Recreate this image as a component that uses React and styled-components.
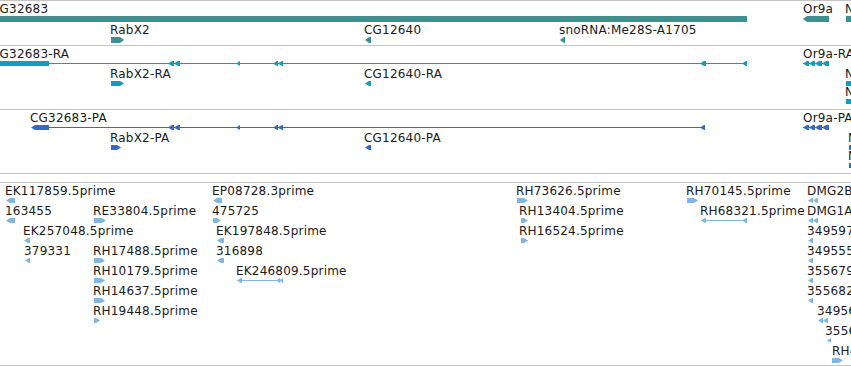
import styled, { createGlobalStyle } from "styled-components";

const GlobalStyle = createGlobalStyle`
  html, body {
    margin: 0;
    padding: 0;
    background: #fff;
  }
  body {
    font-family: "DejaVu Sans", Verdana, sans-serif;
    overflow: hidden;
  }
`;

// glyph parts: [kind, x1, x2] in track pixel coordinates
const L = (a, b) => ["L", a, b];
const R = (a, b) => ["R", a, b];
const B = (a, b) => ["B", a, b];
const ln = (a, b) => ["line", a, b];

const genes = [
  { label: "CG32683", x: -9, y: 1, parts: [B(-4, 747)] },
  { label: "RabX2", x: 110, y: 22, parts: [R(111, 124)] },
  { label: "CG12640", x: 364, y: 22, parts: [L(365, 371)] },
  { label: "snoRNA:Me28S-A1705", x: 559, y: 22, parts: [L(560, 565)] },
  { label: "Or9a", x: 803, y: 1, parts: [L(803, 829)] },
  { label: "Nplp3", x: 845, y: 1, parts: [B(846, 870)] },
];

const exonMarks = [L(168, 174), L(174, 180), L(236, 240), L(273, 278), L(278, 283)];
const orMarks = [ln(803, 829), L(803, 809), L(809, 815), L(815, 822), L(822, 829)];

const transcripts = [
  {
    label: "CG32683-RA",
    x: -9,
    y: 1,
    parts: [B(-4, 49), ln(49, 747), ...exonMarks, L(700, 706), L(742, 747)],
  },
  { label: "RabX2-RA", x: 110, y: 21, parts: [R(111, 124)] },
  { label: "CG12640-RA", x: 364, y: 21, parts: [L(365, 371)] },
  { label: "Or9a-RA", x: 803, y: 1, parts: orMarks },
  { label: "Nplp3-RA", x: 845, y: 21, parts: [B(846, 870)] },
  { label: "Nplp3-RB", x: 845, y: 39, parts: [B(846, 870)] },
];

const proteins = [
  {
    label: "CG32683-PA",
    x: 30,
    y: 1,
    parts: [L(31, 49), ln(49, 705), ...exonMarks, L(700, 705)],
  },
  { label: "RabX2-PA", x: 110, y: 21, parts: [R(111, 121)] },
  { label: "CG12640-PA", x: 364, y: 21, parts: [L(365, 371)] },
  { label: "Or9a-PA", x: 803, y: 1, parts: orMarks },
  { label: "Nplp3-PA", x: 848, y: 21, parts: [B(849, 870)] },
  { label: "Nplp3-PB", x: 848, y: 39, parts: [B(849, 870)] },
];

const row = (r) => 1 + r * 20;

const ests = [
  { label: "EK117859.5prime", x: 5, y: row(0), parts: [L(6, 15)] },
  { label: "EP08728.3prime", x: 212, y: row(0), parts: [L(213, 222)] },
  { label: "RH73626.5prime", x: 516, y: row(0), parts: [R(517, 528)] },
  { label: "RH70145.5prime", x: 686, y: row(0), parts: [R(687, 698)] },
  { label: "DMG2B07.5prime", x: 807, y: row(0), parts: [L(808, 813), L(813, 818)] },

  { label: "163455", x: 5, y: row(1), parts: [L(6, 15)] },
  { label: "RE33804.5prime", x: 93, y: row(1), parts: [R(94, 106)] },
  { label: "475725", x: 212, y: row(1), parts: [R(213, 221)] },
  { label: "RH13404.5prime", x: 519, y: row(1), parts: [R(521, 528)] },
  {
    label: "RH68321.5prime",
    x: 700,
    y: row(1),
    parts: [ln(701, 745), L(701, 706), L(742, 747)],
  },
  { label: "DMG1A12.5prime", x: 807, y: row(1), parts: [L(808, 813), L(813, 818)] },

  { label: "EK257048.5prime", x: 23, y: row(2), parts: [L(24, 30)] },
  { label: "EK197848.5prime", x: 216, y: row(2), parts: [L(217, 224)] },
  { label: "RH16524.5prime", x: 519, y: row(2), parts: [R(521, 528)] },
  { label: "349597", x: 807, y: row(2), parts: [L(808, 813)] },

  { label: "379331", x: 24, y: row(3), parts: [L(25, 30)] },
  { label: "RH17488.5prime", x: 93, y: row(3), parts: [R(94, 105)] },
  { label: "316898", x: 216, y: row(3), parts: [L(217, 224)] },
  { label: "349555", x: 807, y: row(3), parts: [L(808, 813)] },

  { label: "RH10179.5prime", x: 93, y: row(4), parts: [R(94, 105)] },
  {
    label: "EK246809.5prime",
    x: 236,
    y: row(4),
    parts: [ln(237, 281), L(237, 242), L(276, 280), L(279, 283)],
  },
  { label: "355679", x: 807, y: row(4), parts: [L(808, 813)] },

  { label: "RH14637.5prime", x: 93, y: row(5), parts: [R(94, 105)] },
  { label: "355682", x: 807, y: row(5), parts: [L(808, 813)] },

  { label: "RH19448.5prime", x: 93, y: row(6), parts: [R(94, 100)] },
  { label: "349560", x: 817, y: row(6), parts: [L(818, 823), L(823, 828)] },

  { label: "355601", x: 825, y: row(7), parts: [L(827, 831)] },

  { label: "RH47913.5prime", x: 832, y: row(8), parts: [R(832, 843)] },
];

const Page = styled.div`
  width: 851px;
  height: 366px;
  overflow: hidden;
  display: flex;
  flex-direction: column;
`;

const Track = styled.div`
  position: relative;
  flex: none;
  height: ${(p) => p.$height}px;
  border-top: 1px solid #c4c4c4;
  border-bottom: ${(p) => (p.$closed ? "1px solid #c4c4c4" : "none")};
  margin-bottom: ${(p) => p.$gap || 0}px;
  overflow: hidden;
`;

const Label = styled.span.attrs((p) => ({ style: { left: p.$x, top: p.$y } }))`
  position: absolute;
  font-size: 12px;
  line-height: 14px;
  letter-spacing: 0.2px;
  color: #1a1a1a;
  white-space: nowrap;
`;

const GlyphSvg = styled.svg.attrs((p) => ({ style: { left: p.$x, top: p.$y } }))`
  position: absolute;
  display: block;
  overflow: visible;
`;

const Glyph = ({ parts, y, h, color }) => {
  const min = Math.min(...parts.map((p) => p[1]));
  const max = Math.max(...parts.map((p) => p[2]));
  const mid = Math.floor(h / 2);
  return (
    <GlyphSvg $x={min} $y={y} width={max - min} height={h}>
      {parts.map(([kind, a, b], i) => {
        const x1 = a - min;
        const x2 = b - min;
        const t = Math.min(4, x2 - x1);
        if (kind === "line")
          return <rect key={i} x={x1} y={mid} width={x2 - x1} height={1} fill={color} />;
        if (kind === "B")
          return <rect key={i} x={x1} y={0} width={x2 - x1} height={h} fill={color} />;
        const pts =
          kind === "L"
            ? `${x1},${h / 2} ${x1 + t},0 ${x2},0 ${x2},${h} ${x1 + t},${h}`
            : `${x1},0 ${x2 - t},0 ${x2},${h / 2} ${x2 - t},${h} ${x1},${h}`;
        return <polygon key={i} points={pts} fill={color} />;
      })}
    </GlyphSvg>
  );
};

const FeatureTrack = ({ features, color, h, height, closed, gap }) => (
  <Track $height={height} $closed={closed} $gap={gap}>
    {features.map((f) => (
      <div key={f.label + f.x}>
        <Label $x={f.x} $y={f.y}>
          {f.label}
        </Label>
        <Glyph parts={f.parts} y={f.y + 14} h={h} color={color} />
      </div>
    ))}
  </Track>
);

export default function App() {
  return (
    <>
      <GlobalStyle />
      <Page>
        <FeatureTrack features={genes} color="#408f8f" h={6} height={44} />
        <FeatureTrack features={transcripts} color="#129cbe" h={5} height={63} />
        <FeatureTrack features={proteins} color="#3368cc" h={5} height={63} closed gap={8} />
        <FeatureTrack features={ests} color="#82b6dc" h={5} height={182} closed />
      </Page>
    </>
  );
}
